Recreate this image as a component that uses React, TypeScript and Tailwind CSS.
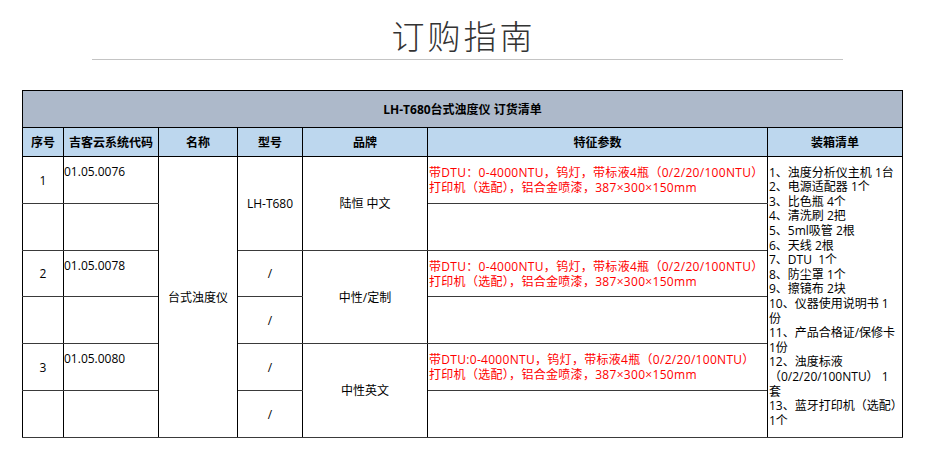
import React from 'react';

const features1 = ['带DTU：0-4000NTU，钨灯，带标液4瓶（0/2/20/100NTU）', '打印机（选配），铝合金喷漆，387×300×150mm'];
const features3 = ['带DTU:0-4000NTU，钨灯，带标液4瓶（0/2/20/100NTU）', '打印机（选配），铝合金喷漆，387×300×150mm'];

const packing = [
  '1、浊度分析仪主机 1台',
  '2、电源适配器 1个',
  '3、比色瓶 4个',
  '4、清洗刷 2把',
  '5、5ml吸管 2根',
  '6、天线 2根',
  '7、DTU  1个',
  '8、防尘罩 1个',
  '9、擦镜布 2块',
  '10、仪器使用说明书 1',
  '份',
  '11、产品合格证/保修卡',
  '1份',
  '12、浊度标液',
  '（0/2/20/100NTU） 1',
  '套',
  '13、蓝牙打印机（选配）',
  '1个',
];

function Lines({ lines }: { lines: string[] }) {
  return (
    <>
      {lines.map((l, i) => (
        <div key={i} className="whitespace-pre">
          {l}
        </div>
      ))}
    </>
  );
}

export default function App() {
  const td = 'border-x border-x-black border-y border-y-[#3a3a3a] p-0';
  const th = 'border border-black p-0 font-bold text-center align-middle';
  const red = 'border-x border-x-black border-y border-y-[#3a3a3a] p-0 pl-px align-middle text-[#ff0000] tracking-[0.3px]';

  return (
    <div className="w-[935px] h-[463px] bg-white font-['Noto_Sans_CJK_SC','Noto_Sans',sans-serif] text-black overflow-hidden">
      <div className="pt-[13px] text-center">
        <h1 className="text-[33px] leading-[44px] font-light text-[#333] tracking-[3px] pr-[8px]">订购指南</h1>
      </div>
      <div className="mt-[2px] mx-auto w-[751px] h-px bg-[#c4c4c4]" />

      <table className="mt-[30px] ml-[22px] w-[880px] table-fixed border-collapse border border-black text-[12px] leading-[15px] font-['Open_Sans','Noto_Sans_CJK_SC',sans-serif]">
        <colgroup>
          <col className="w-[41px]" />
          <col className="w-[95px]" />
          <col className="w-[79px]" />
          <col className="w-[65px]" />
          <col className="w-[125px]" />
          <col className="w-[340px]" />
          <col className="w-[135px]" />
        </colgroup>
        <thead>
          <tr className="h-[37px] bg-[#adb9ca]">
            <th colSpan={7} className={th}>
              LH-T680台式浊度仪 订货清单
            </th>
          </tr>
          <tr className="h-[29px] bg-[#bdd7ee]">
            <th className={th}>序号</th>
            <th className={th}>吉客云系统代码</th>
            <th className={th}>名称</th>
            <th className={th}>型号</th>
            <th className={th}>品牌</th>
            <th className={th}>特征参数</th>
            <th className={th}>装箱清单</th>
          </tr>
        </thead>
        <tbody>
          <tr className="h-[47px]">
            <td className={`${td} text-center align-middle`}>1</td>
            <td className={`${td} align-top pt-[7px]`}>01.05.0076</td>
            <td rowSpan={6} className={`${td} text-center align-middle`}>台式浊度仪</td>
            <td rowSpan={2} className={`${td} text-center align-middle`}>LH-T680</td>
            <td rowSpan={2} className={`${td} text-center align-middle`}>陆恒 中文</td>
            <td className={red}>
              <Lines lines={features1} />
            </td>
            <td rowSpan={6} className={`${td} align-middle leading-[14.6px] pl-px`}>
              <Lines lines={packing} />
            </td>
          </tr>
          <tr className="h-[47px]">
            <td className={td}></td>
            <td className={td}></td>
            <td className={td}></td>
          </tr>
          <tr className="h-[46px]">
            <td className={`${td} text-center align-middle`}>2</td>
            <td className={`${td} align-top pt-[7px]`}>01.05.0078</td>
            <td className={`${td} text-center align-middle`}>/</td>
            <td rowSpan={2} className={`${td} text-center align-middle`}>中性/定制</td>
            <td className={red}>
              <Lines lines={features1} />
            </td>
          </tr>
          <tr className="h-[47px]">
            <td className={td}></td>
            <td className={td}></td>
            <td className={`${td} text-center align-middle`}>/</td>
            <td className={td}></td>
          </tr>
          <tr className="h-[47px]">
            <td className={`${td} text-center align-middle`}>3</td>
            <td className={`${td} align-top pt-[7px]`}>01.05.0080</td>
            <td className={`${td} text-center align-middle`}>/</td>
            <td rowSpan={2} className={`${td} text-center align-middle`}>中性英文</td>
            <td className={red}>
              <Lines lines={features3} />
            </td>
          </tr>
          <tr className="h-[47px]">
            <td className={td}></td>
            <td className={td}></td>
            <td className={`${td} text-center align-middle`}>/</td>
            <td className={td}></td>
          </tr>
        </tbody>
      </table>
    </div>
  );
}
